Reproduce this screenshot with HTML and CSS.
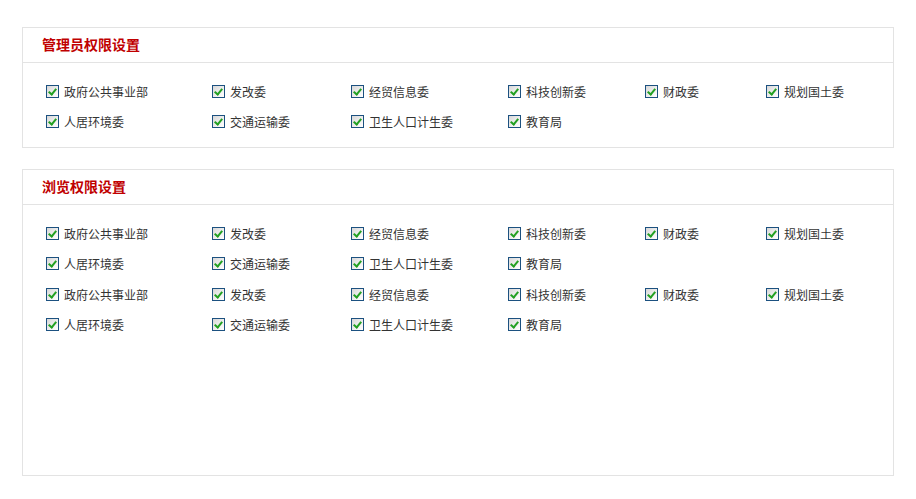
FILE: index.html
```html
<!DOCTYPE html>
<html lang="zh">
<head>
<meta charset="utf-8">
<link rel="stylesheet" href="styles.css">
</head>
<body>
<div class="page">
  <section class="panel">
    <h2 class="panel-title">管理员权限设置</h2>
    <div class="panel-body">
      <ul class="grid">
        <li class="item"><span class="cb"></span>政府公共事业部</li>
        <li class="item"><span class="cb"></span>发改委</li>
        <li class="item"><span class="cb"></span>经贸信息委</li>
        <li class="item"><span class="cb"></span>科技创新委</li>
        <li class="item"><span class="cb"></span>财政委</li>
        <li class="item"><span class="cb"></span>规划国土委</li>
        <li class="item"><span class="cb"></span>人居环境委</li>
        <li class="item"><span class="cb"></span>交通运输委</li>
        <li class="item"><span class="cb"></span>卫生人口计生委</li>
        <li class="item"><span class="cb"></span>教育局</li>
      </ul>
    </div>
  </section>
  <section class="panel panel-tall">
    <h2 class="panel-title">浏览权限设置</h2>
    <div class="panel-body">
      <ul class="grid">
        <li class="item"><span class="cb"></span>政府公共事业部</li>
        <li class="item"><span class="cb"></span>发改委</li>
        <li class="item"><span class="cb"></span>经贸信息委</li>
        <li class="item"><span class="cb"></span>科技创新委</li>
        <li class="item"><span class="cb"></span>财政委</li>
        <li class="item"><span class="cb"></span>规划国土委</li>
        <li class="item"><span class="cb"></span>人居环境委</li>
        <li class="item"><span class="cb"></span>交通运输委</li>
        <li class="item"><span class="cb"></span>卫生人口计生委</li>
        <li class="item"><span class="cb"></span>教育局</li>
      </ul>
      <ul class="grid grid-next">
        <li class="item"><span class="cb"></span>政府公共事业部</li>
        <li class="item"><span class="cb"></span>发改委</li>
        <li class="item"><span class="cb"></span>经贸信息委</li>
        <li class="item"><span class="cb"></span>科技创新委</li>
        <li class="item"><span class="cb"></span>财政委</li>
        <li class="item"><span class="cb"></span>规划国土委</li>
        <li class="item"><span class="cb"></span>人居环境委</li>
        <li class="item"><span class="cb"></span>交通运输委</li>
        <li class="item"><span class="cb"></span>卫生人口计生委</li>
        <li class="item"><span class="cb"></span>教育局</li>
      </ul>
    </div>
  </section>
</div>
</body>
</html>
```
FILE: styles.css
```css
html, body {
  margin: 0;
  padding: 0;
  background: #fff;
}
body {
  font-family: "Noto Sans CJK SC", "Liberation Sans", sans-serif;
  font-size: 12px;
  color: #333;
}
.page {
  padding: 27px 22px 0 22px;
  display: flex;
  flex-direction: column;
  gap: 21px;
}
.panel {
  border: 1px solid #e3e3e3;
  box-sizing: border-box;
  height: 121px;
}
.panel-tall {
  height: 307px;
}
.panel-title {
  margin: 0;
  height: 34px;
  line-height: 33px;
  border-bottom: 1px solid #e3e3e3;
  padding-left: 19px;
  font-size: 14px;
  font-weight: bold;
  color: #c00000;
}
.panel-body {
  padding: 13px 23px 10px 23px;
}
.grid {
  list-style: none;
  margin: 0;
  padding: 0;
  display: grid;
  grid-template-columns: 166px 139px 157px 137px 121px 1fr;
  grid-auto-rows: 30px;
}
.grid-next {
  margin-top: 1px;
}
.item {
  display: flex;
  align-items: center;
  gap: 5px;
  white-space: nowrap;
}
.cb {
  width: 11px;
  height: 11px;
  border: 1px solid #1c5180;
  background: linear-gradient(135deg, #d8d8d8 0%, #f4f4f4 70%, #ffffff 100%);
  position: relative;
  flex: none;
}
.cb::after {
  content: "";
  position: absolute;
  left: 3px;
  top: 1px;
  width: 3px;
  height: 6px;
  border-right: 2px solid #22a022;
  border-bottom: 2px solid #22a022;
  transform: rotate(40deg);
}
```
